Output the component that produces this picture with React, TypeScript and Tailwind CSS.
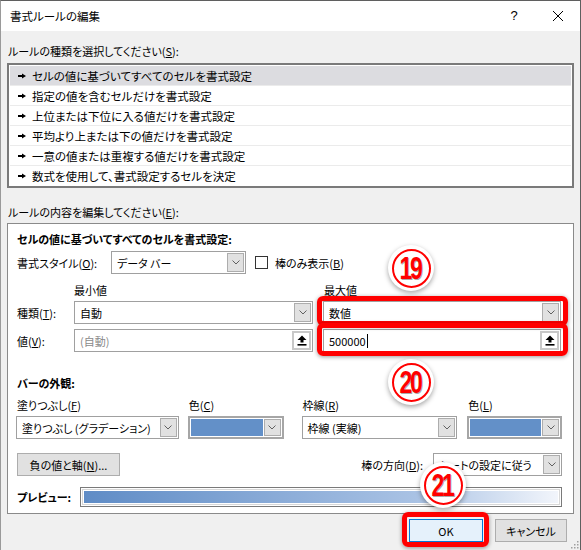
import React from 'react'

const font = "font-['Noto_Sans_CJK_JP','Noto_Sans',sans-serif] [font-feature-settings:'palt'_1]"

function Chevron() {
  return (
    <svg width="8" height="5" viewBox="0 0 8 5">
      <path d="M0.5 0.5 L4 4 L7.5 0.5" fill="none" stroke="#606060" strokeWidth="1" />
    </svg>
  )
}

function DropBtn() {
  return (
    <div className="w-[17px] self-stretch flex items-center justify-center bg-[#e1e1e1] border border-[#adadad]">
      <Chevron />
    </div>
  )
}

function Combo({ text, className = '' }: { text: React.ReactNode; className?: string }) {
  return (
    <div className={`flex h-[23px] border border-[#a0a0a0] bg-white p-px ${className}`}>
      <div className="flex-1 flex items-center pl-[4px] overflow-hidden whitespace-nowrap">{text}</div>
      <DropBtn />
    </div>
  )
}

function ColorCombo({ className = '' }: { className?: string }) {
  return (
    <div className={`flex h-[23px] border-2 border-[#a6a6a6] bg-white p-px ${className}`}>
      <div className="flex-1 bg-[#6390c8] mr-px" />
      <DropBtn />
    </div>
  )
}

function UploadBtn() {
  return (
    <div className="w-[19px] self-stretch flex items-center justify-center bg-white border-2 border-[#c8c8c8]">
      <svg width="10" height="11" viewBox="0 0 10 11">
        <path d="M5 0.5 L9.5 5 H6.5 V7.5 H3.5 V5 H0.5 Z" fill="#000" />
        <rect x="0.5" y="9" width="9" height="1.6" fill="#000" />
      </svg>
    </div>
  )
}

function Pointer() {
  return (
    <svg width="8" height="6" viewBox="0 0 8 6">
      <path d="M0 2 H4 V0.5 L8 3 L4 5.5 V4 H0 Z" fill="#000" />
    </svg>
  )
}

function Badge({ n, className = '' }: { n: string; className?: string }) {
  return (
    <div
      className={`absolute w-[46px] h-[46px] rounded-full bg-white shadow-[0_2px_5px_rgba(0,0,0,0.35)] flex items-center justify-center ${className}`}
    >
      <div className="w-[39px] h-[39px] rounded-full border-[2.5px] border-[#ff0000] flex items-center justify-center">
        <span className="font-['Liberation_Sans',sans-serif] font-bold text-[32px] leading-none text-[#ff0000] tracking-[-3px] scale-x-[0.72] pr-[2px] [text-shadow:1px_1px_0_#aaa]">
          {n}
        </span>
      </div>
    </div>
  )
}

const rules = [
  'セルの値に基づいてすべてのセルを書式設定',
  '指定の値を含むセルだけを書式設定',
  '上位または下位に入る値だけを書式設定',
  '平均より上または下の値だけを書式設定',
  '一意の値または重複する値だけを書式設定',
  '数式を使用して、書式設定するセルを決定',
]

export default function App() {
  return (
    <div
      className={`relative w-[581px] h-[550px] overflow-hidden bg-[#f0f0f0] border-l border-l-[#9a9a9a] border-r border-r-[#5f5f5f] border-t border-t-[#5f5f5f] text-[11px] leading-[16px] text-black ${font}`}
    >
      {/* title bar */}
      <div className="h-[30px] bg-white flex items-center pl-[9px]">
        <span className="flex-1 text-[11.5px]">書式ルールの編集</span>
        <span className="w-[20px] text-center text-[13px] font-['Liberation_Sans',sans-serif] mr-[28px]">?</span>
        <svg width="12" height="12" viewBox="0 0 12 12" className="mr-[16px]">
          <path d="M1 1 L11 11 M11 1 L1 11" stroke="#000" strokeWidth="1" />
        </svg>
      </div>

      <div className="px-[6px]">
        <div className="mt-[12px] h-[16px] pl-px">
          ルールの種類を選択してください(<u>S</u>):
        </div>
        <div className="mt-[4px] w-[567px] h-[125px] border-2 border-[#7a7a7a] bg-white p-px">
          {rules.map((r, i) => (
            <div
              key={r}
              className={`h-[20px] flex items-center gap-[6px] pl-[8px] ${i === 0 ? 'bg-[#dcdce0]' : ''} ${i < 5 ? 'border-b border-[#ebebeb]' : ''}`}
            >
              <Pointer />
              <span className="text-[11.5px]">{r}</span>
            </div>
          ))}
        </div>

        <div className="mt-[16px] h-[16px] pl-px">
          ルールの内容を編集してください(<u>E</u>):
        </div>
        <div className="mt-[3px] w-[567px] h-[291px] border border-[#8a8a8a] bg-white pl-[9px] pr-[11px] pt-[7px]">
          <div className="font-bold h-[16px]">セルの値に基づいてすべてのセルを書式設定:</div>

          <div className="mt-[4px] flex items-center">
            <span className="w-[94px]">
              書式スタイル(<u>O</u>):
            </span>
            <Combo text="データ バー" className="w-[135px]" />
            <div className="ml-[9px] w-[13px] h-[13px] border border-[#333] bg-white" />
            <span className="ml-[7px]">
              棒のみ表示(<u>B</u>)
            </span>
          </div>

          <div className="mt-[8px] flex h-[16px]">
            <span className="ml-[57px] w-[250px]">最小値</span>
            <span>最大値</span>
          </div>

          <div className="mt-[3px] flex items-center">
            <span className="w-[57px]">
              種類(<u>T</u>):
            </span>
            <Combo text="自動" className="w-[239px]" />
            <Combo text="数値" className="ml-[10px] w-[238px]" />
          </div>

          <div className="mt-[5px] flex items-center">
            <span className="w-[57px]">
              値(<u>V</u>):
            </span>
            <div className="w-[239px] h-[23px] flex border border-[#a0a0a0] bg-white p-px">
              <div className="flex-1 flex items-center pl-[4px] text-[#8a8a8a]">(自動)</div>
              <UploadBtn />
            </div>
            <div className="ml-[10px] w-[238px] h-[23px] flex border border-[#a0a0a0] bg-white p-px">
              <div className="flex-1 flex items-center pl-[4px]">
                500000
                <span className="ml-px w-px h-[14px] bg-black" />
              </div>
              <UploadBtn />
            </div>
          </div>

          <div className="mt-[23px] font-bold h-[16px]">バーの外観:</div>

          <div className="mt-[6px] flex -ml-px">
            <div className="w-[163px] flex flex-col">
              <span className="pl-px h-[16px]">
                塗りつぶし(<u>F</u>)
              </span>
              <Combo text="塗りつぶし (グラデーション)" className="mt-[3px] w-full" />
            </div>
            <div className="ml-[9px] w-[96px] flex flex-col">
              <span className="pl-px h-[16px]">
                色(<u>C</u>)
              </span>
              <ColorCombo className="mt-[3px] w-full" />
            </div>
            <div className="ml-[18px] w-[156px] flex flex-col">
              <span className="pl-px h-[16px]">
                枠線(<u>R</u>)
              </span>
              <Combo text="枠線 (実線)" className="mt-[3px] w-full" />
            </div>
            <div className="ml-[10px] w-[95px] flex flex-col">
              <span className="pl-px h-[16px]">
                色(<u>L</u>)
              </span>
              <ColorCombo className="mt-[3px] w-full" />
            </div>
          </div>

          <div className="mt-[14px] flex items-center">
            <div className="w-[103px] h-[23px] flex items-center justify-center bg-[#e1e1e1] border border-[#adadad]">
              負の値と軸(<u>N</u>)...
            </div>
            <span className="flex-1 text-right">
              棒の方向(<u>D</u>):
            </span>
            <Combo text="シートの設定に従う" className="ml-[10px] w-[129px] h-[22px]" />
          </div>

          <div className="mt-[11px] flex items-center">
            <span className="w-[63px] font-bold">プレビュー:</span>
            <div className="w-[482px] h-[20px] border border-[#7a7a7a] bg-white p-px">
              <div className="h-full border border-[#d8d8d8] p-px">
                <div className="h-full bg-[linear-gradient(to_right,#5f8cc6,#a9c2e4_70%,#f2f5fb)]" />
              </div>
            </div>
          </div>
        </div>
      </div>

      <div className="mt-[5px] flex justify-end gap-[12px] pr-[13px]">
        <div className="w-[74px] h-[23px] flex items-center justify-center bg-[#e5f1fb] border border-[#0078d7]">
          OK
        </div>
        <div className="w-[72px] h-[23px] flex items-center justify-center bg-[#e1e1e1] border border-[#adadad]">
          キャンセル
        </div>
      </div>

      {/* resize grip */}
      <svg width="10" height="10" viewBox="0 0 10 10" className="absolute right-[1px] bottom-[1px]">
        {[
          [8, 0], [8, 3], [5, 3], [8, 6], [5, 6], [2, 6],
        ].map(([x, y]) => (
          <rect key={`${x}-${y}`} x={x} y={y + 2} width="1.5" height="1.5" fill="#a0a0a0" />
        ))}
      </svg>

      {/* annotations */}
      <div className="absolute left-[316px] top-[295px] w-[251px] h-[30px] rounded-[6px] border-[5px] border-[#ff0000] shadow-[0_1px_4px_rgba(0,0,0,0.4)]" />
      <div className="absolute left-[316px] top-[322px] w-[251px] h-[33px] rounded-[6px] border-[5px] border-[#ff0000] shadow-[0_1px_4px_rgba(0,0,0,0.4)]" />
      <div className="absolute left-[401px] top-[511px] w-[87px] h-[35px] rounded-[6px] border-[5px] border-[#ff0000] shadow-[0_1px_4px_rgba(0,0,0,0.4)]" />
      <Badge n="19" className="left-[387px] top-[244px]" />
      <Badge n="20" className="left-[387px] top-[358px]" />
      <Badge n="21" className="left-[419px] top-[461px]" />
    </div>
  )
}
